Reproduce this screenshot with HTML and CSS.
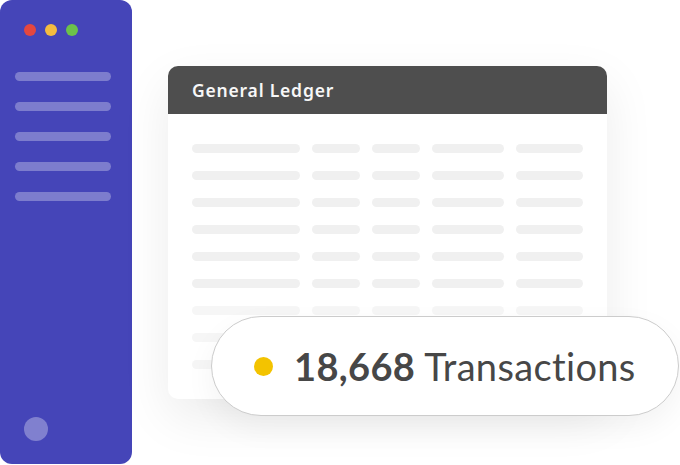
FILE: index.html
```html
<!DOCTYPE html>
<html lang="en">
<head>
    <meta charset="UTF-8">
    <meta name="viewport" content="width=device-width, initial-scale=1.0">
    <title>General Ledger</title>
    <link rel="stylesheet" href="styles.css">
</head>
<body>
    <div class="screen">
        <aside class="sidebar">
            <div class="traffic">
                <span class="light red"></span>
                <span class="light yellow"></span>
                <span class="light green"></span>
            </div>
            <div class="nav">
                <span class="nav-line"></span>
                <span class="nav-line"></span>
                <span class="nav-line"></span>
                <span class="nav-line"></span>
                <span class="nav-line"></span>
            </div>
            <span class="avatar"></span>
        </aside>

        <main class="stage">
            <section class="ledger">
                <div class="ledger-header">General Ledger</div>
                <div class="ledger-body">
                    <div class="row"><span class="cell c1"></span><span class="cell c2"></span><span class="cell c3"></span><span class="cell c4"></span><span class="cell c5"></span></div>
                    <div class="row"><span class="cell c1"></span><span class="cell c2"></span><span class="cell c3"></span><span class="cell c4"></span><span class="cell c5"></span></div>
                    <div class="row"><span class="cell c1"></span><span class="cell c2"></span><span class="cell c3"></span><span class="cell c4"></span><span class="cell c5"></span></div>
                    <div class="row"><span class="cell c1"></span><span class="cell c2"></span><span class="cell c3"></span><span class="cell c4"></span><span class="cell c5"></span></div>
                    <div class="row"><span class="cell c1"></span><span class="cell c2"></span><span class="cell c3"></span><span class="cell c4"></span><span class="cell c5"></span></div>
                    <div class="row"><span class="cell c1"></span><span class="cell c2"></span><span class="cell c3"></span><span class="cell c4"></span><span class="cell c5"></span></div>
                    <div class="row faded"><span class="cell c1"></span><span class="cell c2"></span><span class="cell c3"></span><span class="cell c4"></span><span class="cell c5"></span></div>
                    <div class="row faded"><span class="cell c1"></span><span class="cell c2"></span><span class="cell c3"></span><span class="cell c4"></span><span class="cell c5"></span></div>
                    <div class="row faded"><span class="cell c1"></span><span class="cell c2"></span><span class="cell c3"></span><span class="cell c4"></span><span class="cell c5"></span></div>
                </div>
            </section>

            <!-- pill floats over the ledger card -->
            <div class="counter">
                <span class="counter-dot"></span>
                <span class="counter-text"><b>18,668</b> Transactions</span>
            </div>
        </main>
    </div>
</body>
</html>
```

FILE: styles.css
```css
* {
    margin: 0;
    padding: 0;
    box-sizing: border-box;
}

body {
    font-family: 'Lato', 'Noto Sans', sans-serif;
    background: #ffffff;
    width: 680px;
    height: 465px;
    overflow: hidden;
}

.screen {
    display: flex;
    height: 465px;
}

/* sidebar */
.sidebar {
    width: 132px;
    height: 464px;
    background: #4545b8;
    border-radius: 12px;
    padding: 24px 21px 23px 15px;
    display: flex;
    flex-direction: column;
}

.traffic {
    display: flex;
    gap: 9px;
    margin-left: 9px;
}

.light {
    width: 12px;
    height: 12px;
    border-radius: 50%;
}

.red { background: #e5473f; }
.yellow { background: #f4bc40; }
.green { background: #6cc24a; }

.nav {
    display: flex;
    flex-direction: column;
    gap: 21px;
    margin-top: 36px;
}

.nav-line {
    height: 9px;
    border-radius: 5px;
    background: rgba(255, 255, 255, 0.3);
}

.avatar {
    width: 24px;
    height: 24px;
    border-radius: 50%;
    background: rgba(255, 255, 255, 0.32);
    margin-top: auto;
    margin-left: 9px;
}

/* ledger card */
.stage {
    position: relative;
    flex: 1;
    padding: 66px 0 0 36px;
}

.ledger {
    width: 439px;
    background: white;
    border-radius: 10px;
    overflow: hidden;
    box-shadow: 0 18px 50px rgba(0, 0, 0, 0.08);
}

.ledger-header {
    height: 48px;
    background: #4e4e4e;
    color: #f7f7f7;
    font-family: 'Noto Sans', 'Lato', sans-serif;
    font-size: 17.5px;
    font-weight: 600;
    letter-spacing: 0.8px;
    padding: 12px 24px 0;
}

.ledger-body {
    padding: 30px 24px 30px;
    display: flex;
    flex-direction: column;
    gap: 18px;
}

.row {
    display: flex;
    gap: 12px;
}

.cell {
    height: 9px;
    border-radius: 5px;
    background: #f0f0f0;
}

.row.faded .cell {
    background: #f6f6f6;
}

.c1 { width: 108px; }
.c2 { width: 48px; }
.c3 { width: 48px; }
.c4 { width: 72px; }
.c5 { width: 67px; }

/* transactions pill */
.counter {
    position: absolute;
    left: 79px;
    top: 316px;
    width: 468px;
    height: 100px;
    background: white;
    border: 1.5px solid #cccccc;
    border-radius: 50px;
    box-shadow: 0 12px 30px rgba(0, 0, 0, 0.05);
    display: flex;
    align-items: center;
    padding-left: 42px;
}

.counter-dot {
    width: 19px;
    height: 19px;
    border-radius: 50%;
    background: #f3c300;
    margin-right: 21px;
}

.counter-text {
    font-size: 38px;
    color: #474747;
    letter-spacing: 0.35px;
}

.counter-text b {
    font-weight: 700;
}
```
